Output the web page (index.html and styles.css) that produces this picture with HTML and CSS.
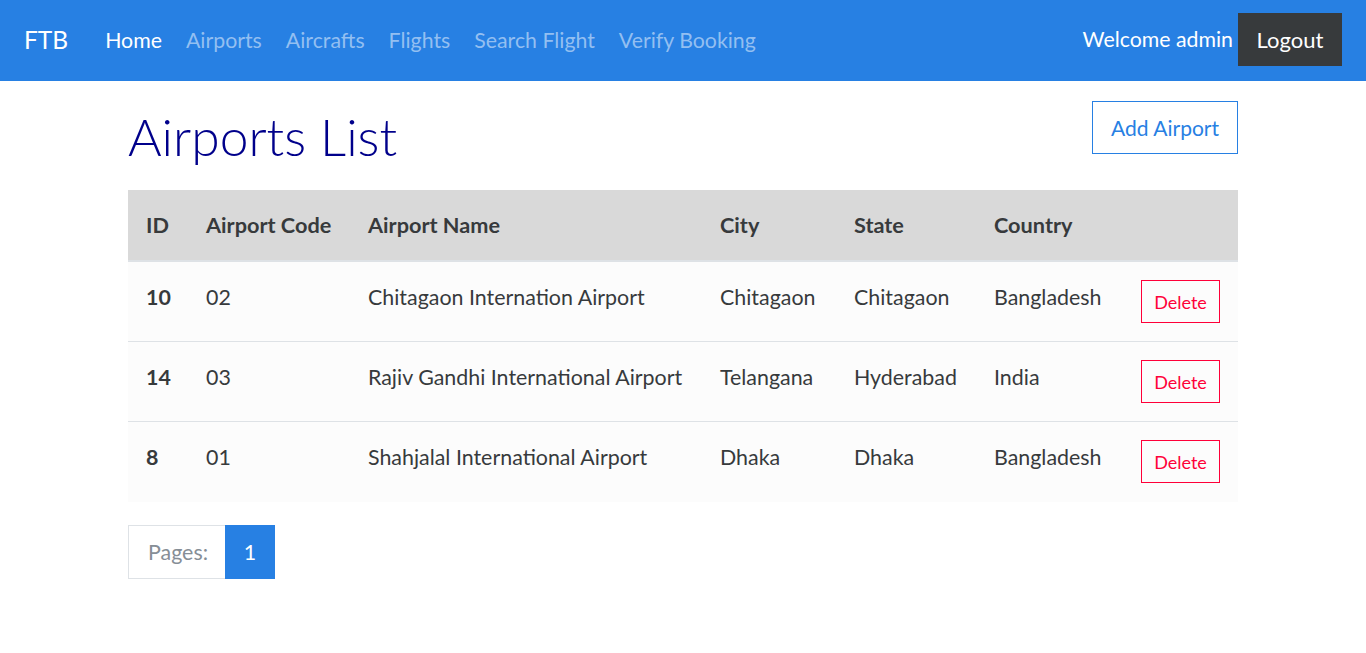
FILE: index.html
```html
<!DOCTYPE html>
<html lang="en">
<head>
<meta charset="utf-8">
<title>Airports List</title>
<link rel="stylesheet" href="styles.css">
</head>
<body>
<nav class="navbar">
  <a class="brand" href="#">FTB</a>
  <ul class="nav-links">
    <li><a class="nav-link active" href="#">Home</a></li>
    <li><a class="nav-link" href="#">Airports</a></li>
    <li><a class="nav-link" href="#">Aircrafts</a></li>
    <li><a class="nav-link" href="#">Flights</a></li>
    <li><a class="nav-link" href="#">Search Flight</a></li>
    <li><a class="nav-link" href="#">Verify Booking</a></li>
  </ul>
  <div class="nav-right">
    <span class="welcome">Welcome admin</span>
    <button class="btn-logout">Logout</button>
  </div>
</nav>
<main class="container">
  <div class="page-head">
    <h1 class="title">Airports List</h1>
    <a class="btn-add" href="#">Add Airport</a>
  </div>
  <table class="table">
    <thead>
      <tr>
        <th class="c-id">ID</th>
        <th class="c-code">Airport Code</th>
        <th class="c-name">Airport Name</th>
        <th class="c-city">City</th>
        <th class="c-state">State</th>
        <th class="c-country">Country</th>
        <th class="c-act"></th>
      </tr>
    </thead>
    <tbody>
      <tr>
        <th>10</th><td>02</td><td>Chitagaon Internation Airport</td><td>Chitagaon</td><td>Chitagaon</td><td>Bangladesh</td>
        <td><button class="btn-delete">Delete</button></td>
      </tr>
      <tr>
        <th>14</th><td>03</td><td>Rajiv Gandhi International Airport</td><td>Telangana</td><td>Hyderabad</td><td>India</td>
        <td><button class="btn-delete">Delete</button></td>
      </tr>
      <tr>
        <th>8</th><td>01</td><td>Shahjalal International Airport</td><td>Dhaka</td><td>Dhaka</td><td>Bangladesh</td>
        <td><button class="btn-delete">Delete</button></td>
      </tr>
    </tbody>
  </table>
  <div class="pagination">
    <span class="page-label">Pages:</span>
    <a class="page-num" href="#">1</a>
  </div>
</main>
</body>
</html>
```
FILE: styles.css
```css
* { box-sizing: border-box; }
html, body { margin: 0; padding: 0; }
body {
  font-family: Lato, "Open Sans", sans-serif;
  font-size: 21.4px;
  color: #373a3c;
  background: #fff;
}
a { text-decoration: none; }

.navbar {
  height: 81px;
  background: #2780e3;
  display: flex;
  align-items: center;
  padding: 0 24px;
}
.brand {
  color: #fff;
  font-size: 24.5px;
  margin-right: 25px;
  margin-top: -2px;
}
.nav-links {
  list-style: none;
  display: flex;
  margin: 0;
  padding: 0;
  flex: 1;
}
.nav-link {
  display: block;
  padding: 0 12px;
  font-size: 21.3px;
  color: #93bff1;
  margin-top: -2px;
}
.nav-link.active { color: #fff; }
.nav-right {
  display: flex;
  align-items: center;
  gap: 5px;
}
.welcome {
  color: #fff;
  font-size: 21.3px;
  margin-top: -4px;
}
.btn-logout {
  font-family: inherit;
  font-size: 22px;
  color: #fff;
  background: #373a3c;
  border: 0;
  height: 53px;
  width: 104px;
  padding: 0;
  margin-top: -2px;
}

.container {
  width: 1110px;
  margin: 0 auto;
}
.page-head {
  display: flex;
  justify-content: space-between;
  align-items: flex-start;
  padding-top: 20px;
  height: 109px;
}
.title {
  margin: 0;
  font-size: 51.5px;
  font-weight: 300;
  line-height: 64px;
  margin-top: 3px;
  color: #00008b;
}
.btn-add {
  display: block;
  border: 1px solid #2780e3;
  color: #2780e3;
  font-size: 21px;
  height: 53px;
  line-height: 52px;
  padding: 0 18px;
}

.table {
  width: 100%;
  border-collapse: collapse;
  table-layout: fixed;
}
.table th, .table td {
  text-align: left;
  vertical-align: top;
  padding: 18px;
  line-height: 34px;
}
.table thead th {
  background: #d9d9d9;
  font-weight: 700;
  font-size: 21.7px;
  height: 71px;
  border-bottom: 2px solid #dee2e6;
}
.table tbody tr { background: #fcfcfc; }
.table tbody th, .table tbody td {
  height: 80px;
  border-top: 1px solid #dee2e6;
  padding-top: 18px;
}
.table tbody tr:first-child th, .table tbody tr:first-child td { border-top: 0; }
.table tbody th { font-weight: 700; }
.c-id { width: 60px; }
.c-code { width: 162px; }
.c-name { width: 352px; }
.c-city { width: 134px; }
.c-state { width: 140px; }
.c-country { width: 147px; }
.c-act { width: 115px; }

.btn-delete {
  font-family: inherit;
  font-size: 18px;
  color: #ff0039;
  background: transparent;
  border: 1px solid #ff0039;
  width: 79px;
  height: 43px;
  padding: 0;
  display: block;
}

.pagination {
  display: flex;
  margin-top: 23px;
  height: 54px;
}
.page-label {
  display: flex;
  align-items: center;
  width: 97px;
  padding-left: 19px;
  border: 1px solid #dee2e6;
  border-right: 0;
  color: #868e96;
}
.page-num {
  display: flex;
  align-items: center;
  justify-content: center;
  width: 50px;
  background: #2780e3;
  color: #fff;
}
```
